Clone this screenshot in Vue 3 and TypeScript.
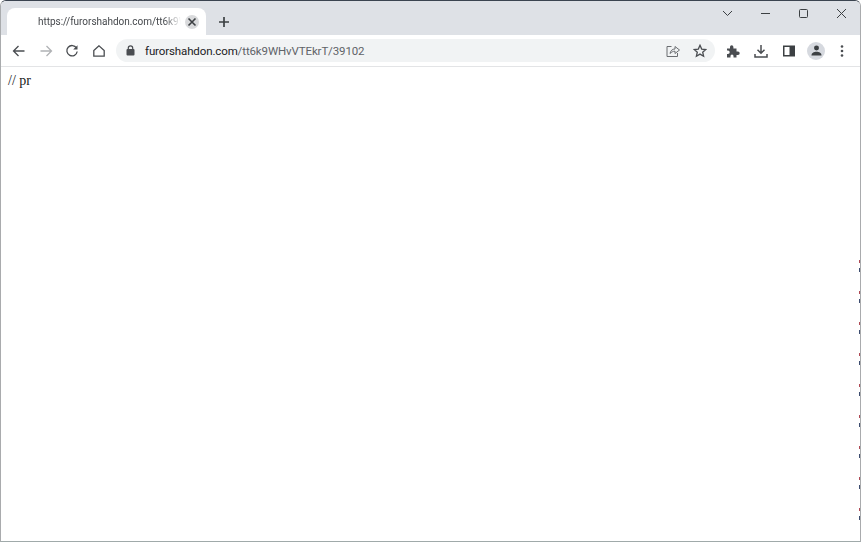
<script setup lang="ts">
const rightMarks = Array.from({ length: 9 }, (_, i) => i)
</script>

<template>
  <div class="win">
    <div class="tabstrip">
      <div class="tab">
        <span class="tab-title">https://furorshahdon.com/tt6k9WHvVTEkrT/39102</span>
        <span class="tab-close">
          <svg width="10" height="10" viewBox="0 0 10 10"><path d="M1.500 1.500l7 7M8.500 1.500l-7 7" stroke="#3c4043" stroke-width="1.600" fill="none" /></svg>
        </span>
      </div>
      <svg class="newtab" width="12" height="12" viewBox="0 0 12 12"><path d="M6 1v10M1 6h10" stroke="#3c4043" stroke-width="1.700" fill="none" /></svg>
      <div class="caption">
        <svg class="cap" width="38" height="12" viewBox="0 0 38 12"><path d="M15 4l4.500 4.500L24 4" stroke="#3c4043" stroke-width="1" fill="none" /></svg>
        <svg class="cap" width="38" height="12" viewBox="0 0 38 12"><path d="M15 6.500h9" stroke="#3c4043" stroke-width="1" fill="none" /></svg>
        <svg class="cap" width="38" height="12" viewBox="0 0 38 12"><rect x="15.500" y="2.500" width="8" height="8" rx="1" stroke="#3c4043" stroke-width="1" fill="none" /></svg>
        <svg class="cap" width="38" height="12" viewBox="0 0 38 12"><path d="M15 2l9 9M24 2l-9 9" stroke="#3c4043" stroke-width="1" fill="none" /></svg>
      </div>
    </div>
    <div class="toolbar">
      <svg class="tool" width="16" height="16" viewBox="0 0 16 16"><path d="M13.500 8H3M7.500 3L2.500 8l5 5" stroke="#4a4d51" stroke-width="1.300" fill="none" /></svg>
      <svg class="tool" width="16" height="16" viewBox="0 0 16 16"><path d="M2.500 8H13M8.500 3l5 5-5 5" stroke="#b0b2b5" stroke-width="1.300" fill="none" /></svg>
      <svg class="tool" width="16" height="16" viewBox="0 0 16 16"><path d="M12.500 5A5.200 5.200 0 1 0 13.200 8.500" stroke="#4a4d51" stroke-width="1.300" fill="none" /><path d="M13.500 2.200v4.300H9.200z" fill="#4a4d51" /></svg>
      <svg class="tool" width="16" height="16" viewBox="0 0 16 16"><path d="M8 2.800L2.800 7.600V13.200H13.200V7.600z" stroke="#4a4d51" stroke-width="1.300" fill="none" /></svg>
      <div class="omnibox">
        <svg width="9" height="11" viewBox="0 0 9 11"><rect x="0.500" y="4" width="8" height="6.500" rx="1" fill="#4a4d51" /><path d="M2.300 4.500V3a2.200 2.200 0 0 1 4.400 0v1.500" stroke="#4a4d51" stroke-width="1.200" fill="none" /></svg>
        <span class="url"><span class="host">furorshahdon.com</span>/tt6k9WHvVTEkrT/39102</span>
        <svg class="omni-icon share" width="14" height="14" viewBox="0 0 14 14"><path d="M5.500 2.500H1v10h10.500V9" stroke="#6a6d71" stroke-width="1" fill="none" /><path d="M4 9.500C4.500 6.500 6.500 5 9 5V2.500L13.500 6 9 9.500V7.200C7 7.200 5.500 8 4 9.500z" stroke="#6a6d71" stroke-width="1" fill="none" /></svg>
        <svg class="omni-icon" width="14" height="14" viewBox="0 0 14 14"><path d="M7 1.300l1.700 3.800 4.100.4-3.100 2.700.9 4L7 10.100l-3.600 2.100.9-4-3.100-2.700 4.100-.4z" stroke="#4a4d51" stroke-width="1.300" fill="none" /></svg>
      </div>
      <svg class="ext" width="14" height="14" viewBox="0 0 14 14"><path d="M1 4.500h3V3a1.700 1.700 0 0 1 3.400 0v1.500h3.100v3H12a1.700 1.700 0 0 1 0 3.400h-1.500V13.500H7.500V12a1.500 1.500 0 0 0-3 0v1.500H1V10h1a1.700 1.700 0 0 0 0-3.400H1z" fill="#4a4d51" /></svg>
      <svg class="dl" width="14" height="14" viewBox="0 0 14 14"><path d="M7 1v8M3.500 5.800L7 9.300l3.500-3.500" stroke="#4a4d51" stroke-width="1.500" fill="none" /><path d="M1 10v3h12v-3" stroke="#4a4d51" stroke-width="1.500" fill="none" /></svg>
      <svg class="side" width="12" height="12" viewBox="0 0 12 12"><path d="M0 0.500h12v11H0z M1.500 2v8H6.500V2z" fill="#3c4043" fill-rule="evenodd" /></svg>
      <span class="avatar">
        <svg width="11" height="11" viewBox="0 0 12 12"><circle cx="6" cy="3.300" r="2.700" fill="#3c4043" /><path d="M0.500 11.500C0.500 8.500 3 7.300 6 7.300s5.500 1.200 5.500 4.200z" fill="#3c4043" /></svg>
      </span>
      <svg class="menu" width="4" height="14" viewBox="0 0 4 14"><circle cx="2" cy="2.500" r="1.300" fill="#4a4d51" /><circle cx="2" cy="7" r="1.300" fill="#4a4d51" /><circle cx="2" cy="11.500" r="1.300" fill="#4a4d51" /></svg>
    </div>
    <div class="page">// pr</div>
    <i v-for="n in rightMarks" :key="n" class="mark" :style="{ top: 259 + n * 31 + 'px' }"></i>
  </div>
</template>

<style scoped>
.win {
  position: relative;
  width: 861px;
  height: 542px;
  box-sizing: border-box;
  display: flex;
  flex-direction: column;
  overflow: hidden;
  background: #fff;
  border-left: 1px solid #a9abad;
  border-right: 1px solid #a9abad;
  border-bottom: 1px solid #a0aaaa;
  border-top: 1px solid #3b4450;
  border-top-right-radius: 6px;
  border-top-left-radius: 6px;
  font-family: Roboto, "Liberation Sans", Arial, sans-serif;
}
.mark {
  position: absolute;
  right: 0;
  width: 1px;
  height: 12px;
  background: linear-gradient(#b04a55 0 3px, transparent 3px 8px, #3d4d70 8px 12px);
}
.tabstrip {
  height: 34px;
  flex: none;
  display: flex;
  align-items: flex-end;
  background: #dee1e6;
  padding-left: 6px;
}
.tab {
  width: 199px;
  height: 27px;
  box-sizing: border-box;
  background: #fff;
  border-radius: 8px 8px 0 0;
  display: flex;
  align-items: center;
  padding-left: 31px;
  padding-right: 7px;
  gap: 4px;
}
.tab-title {
  flex: 1;
  min-width: 0;
  overflow: hidden;
  white-space: nowrap;
  font-size: 10px;
  letter-spacing: -0.03px;
  color: #45484c;
  -webkit-mask-image: linear-gradient(90deg, #000 88%, transparent);
  mask-image: linear-gradient(90deg, #000 88%, transparent);
}
.tab-close {
  width: 14px;
  height: 14px;
  border-radius: 50%;
  background: #d9dadc;
  display: flex;
  align-items: center;
  justify-content: center;
}
.newtab {
  margin-left: 12px;
  margin-bottom: 7px;
}
.caption {
  margin-left: auto;
  align-self: flex-start;
  display: flex;
  padding-top: 6px;
}
.toolbar {
  height: 32px;
  flex: none;
  box-sizing: border-box;
  display: flex;
  align-items: center;
  padding-left: 10px;
  border-bottom: 1px solid #e3e4e6;
}
.tool {
  margin-right: 10.500px;
}
.omnibox {
  margin-left: -1px;
  width: 599px;
  height: 23px;
  border-radius: 12px;
  background: #f1f3f4;
  display: flex;
  align-items: center;
  box-sizing: border-box;
  padding-left: 10px;
}
.url {
  margin-left: 10px;
  font-size: 11.500px;
  letter-spacing: -0.12px;
  color: #5f6368;
  flex: 1;
}
.host {
  color: #202124;
}
.omni-icon {
  margin-right: 8px;
}
.share {
  margin-right: 13px;
}
.ext {
  margin-left: 11px;
}
.dl {
  margin-left: 14px;
}
.side {
  margin-left: 15px;
}
.avatar {
  margin-left: 12px;
  width: 18px;
  height: 18px;
  border-radius: 50%;
  background: #d6d9df;
  display: flex;
  align-items: center;
  justify-content: center;
}
.menu {
  margin-left: 15px;
}
.page {
  padding: 6px 7px;
  font-family: "Liberation Serif", "Times New Roman", serif;
  font-size: 14px;
  line-height: 16px;
  color: #202020;
}
</style>
